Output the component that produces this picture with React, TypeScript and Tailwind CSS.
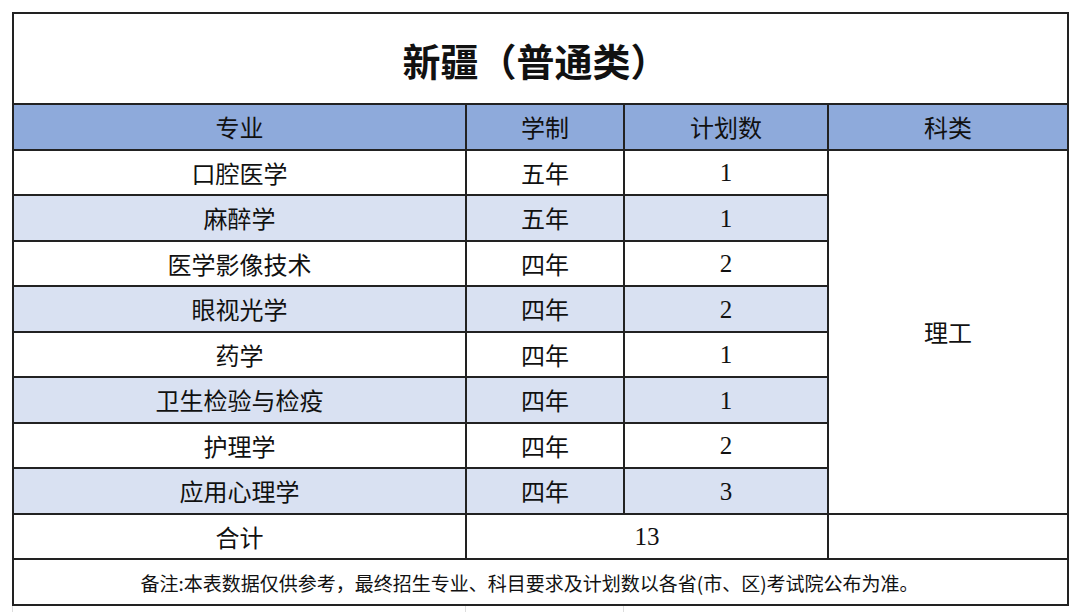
import React from "react";

const rows: { name: string; years: string; num: string }[] = [
  { name: "口腔医学", years: "五年", num: "1" },
  { name: "麻醉学", years: "五年", num: "1" },
  { name: "医学影像技术", years: "四年", num: "2" },
  { name: "眼视光学", years: "四年", num: "2" },
  { name: "药学", years: "四年", num: "1" },
  { name: "卫生检验与检疫", years: "四年", num: "1" },
  { name: "护理学", years: "四年", num: "2" },
  { name: "应用心理学", years: "四年", num: "3" },
];

const cjk = "font-['Noto_Sans_CJK_SC',sans-serif]";
const serif = "font-['Liberation_Serif','Noto_Sans_CJK_SC',serif] text-[25px]";

export default function App() {
  return (
    <div className="w-[1080px] h-[612px] bg-white overflow-hidden">
      <div className="pl-[12px] pt-[12px]">
        <table className={`table-fixed border-collapse w-[1055px] text-[#111] ${cjk}`}>
          <colgroup>
            <col className="w-[453px]" />
            <col className="w-[158px]" />
            <col className="w-[204px]" />
            <col className="w-[240px]" />
          </colgroup>
          <tbody>
            <tr className="h-[91px]">
              <td colSpan={4} className="border-2 border-[#222] text-center text-[38px] font-bold leading-none pt-[2px] pr-[10px]">
                新疆（普通类）
              </td>
            </tr>
            <tr className="h-[46px] bg-[#8eaadb] text-[24px] leading-none">
              <td className="border-2 border-[#222] text-center">专业</td>
              <td className="border-2 border-[#222] text-center">学制</td>
              <td className="border-2 border-[#222] text-center">计划数</td>
              <td className="border-2 border-[#222] text-center">科类</td>
            </tr>
            {rows.map((r, i) => (
              <tr
                key={r.name}
                className={`${i % 2 === 0 ? "h-[45px] bg-white" : "h-[46px] bg-[#d9e1f2]"} text-[24px] leading-none`}
              >
                <td className="border-2 border-[#222] text-center">{r.name}</td>
                <td className="border-2 border-[#222] text-center">{r.years}</td>
                <td className={`border-2 border-[#222] text-center ${serif}`}>{r.num}</td>
                {i === 0 && (
                  <td rowSpan={8} className="border-2 border-[#222] text-center bg-white">
                    理工
                  </td>
                )}
              </tr>
            ))}
            <tr className="h-[45px] text-[24px] leading-none">
              <td className="border-2 border-[#222] text-center">合计</td>
              <td colSpan={2} className={`border-2 border-[#222] text-center ${serif}`}>
                13
              </td>
              <td className="border-2 border-[#222]"></td>
            </tr>
            <tr className="h-[46px] text-[19px] leading-none">
              <td colSpan={4} className="border-2 border-[#222] text-center pr-[22px]">
                备注:本表数据仅供参考，最终招生专业、科目要求及计划数以各省(市、区)考试院公布为准。
              </td>
            </tr>
          </tbody>
        </table>
        <div className="flex h-[10px] w-[1055px]">
          <div className="w-[453px] border-l border-[#ddd]"></div>
          <div className="w-[158px] border-l border-[#ddd]"></div>
          <div className="w-[204px] border-l border-[#ddd]"></div>
          <div className="w-[240px]"></div>
        </div>
      </div>
    </div>
  );
}
